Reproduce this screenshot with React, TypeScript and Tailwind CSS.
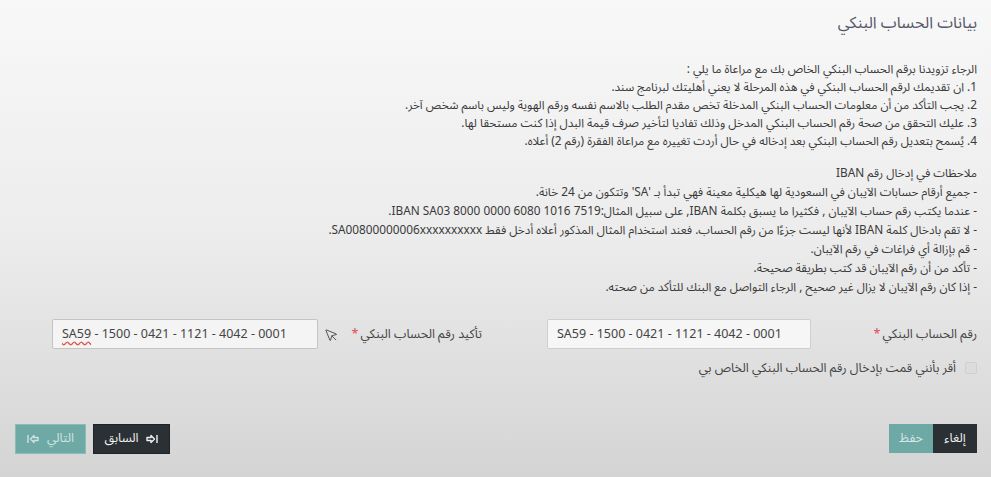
import { MousePointer } from "lucide-react";

const font = { fontFamily: '"Noto Sans Arabic", "DejaVu Sans", "Noto Sans", sans-serif' };

const intro = [
  "الرجاء تزويدنا برقم الحساب البنكي الخاص بك مع مراعاة ما يلي :",
  "1. ان تقديمك لرقم الحساب البنكي في هذه المرحلة لا يعني أهليتك لبرنامج سند.",
  "2. يجب التأكد من أن معلومات الحساب البنكي المدخلة تخص مقدم الطلب بالاسم نفسه ورقم الهوية وليس باسم شخص آخر.",
  "3. عليك التحقق من صحة رقم الحساب البنكي المدخل وذلك تفاديا لتأخير صرف قيمة البدل إذا كنت مستحقا لها.",
  "4. يُسمح بتعديل رقم الحساب البنكي بعد إدخاله في حال أردت تغييره مع مراعاة الفقرة (رقم 2) أعلاه.",
];

const notes = [
  "ملاحظات في إدخال رقم IBAN",
  "- جميع أرقام حسابات الآيبان في السعودية لها هيكلية معينة فهي تبدأ بـ 'SA' وتتكون من 24 خانة.",
  "- عندما يكتب رقم حساب الآيبان , فكثيرا ما يسبق بكلمة IBAN, على سبيل المثال:7519 1016 6080 0000 8000 IBAN SA03.",
  "- لا تقم بادخال كلمة IBAN لأنها ليست جزءًا من رقم الحساب. فعند استخدام المثال المذكور أعلاه أدخل فقط SA00800000006xxxxxxxxxx.",
  "- قم بإزالة أي فراغات في رقم الآيبان.",
  "- تأكد من أن رقم الآيبان قد كتب بطريقة صحيحة.",
  "- إذا كان رقم الآيبان لا يزال غير صحيح , الرجاء التواصل مع البنك للتأكد من صحته.",
];

function ArrowIcon({ dir }: { dir: "left" | "right" }) {
  return (
    <svg width="12" height="10" viewBox="0 0 12 10" className={dir === "left" ? "" : "rotate-180"}>
      <path d="M1 1v8M3.5 5L7 1.5V3.5H11V6.5H7V8.5Z" fill="none" stroke="currentColor" strokeWidth="1.4" strokeLinejoin="round" />
    </svg>
  );
}

export default function App() {
  return (
    <div
      dir="rtl"
      style={font}
      className="flex h-[477px] w-[991px] flex-col bg-gradient-to-b from-[#f8f8f8] via-[#ececec] to-[#d4d4d4] pr-[14px] pl-[15px] text-[#3a3a3a]"
    >
      <h1 className="pt-[12px] text-[16px] leading-[22px] text-[#56566a]">بيانات الحساب البنكي</h1>

      <div className="mt-[27px] text-[11.8px] leading-[18px]">
        {intro.map((l) => (
          <p key={l}>{l}</p>
        ))}
      </div>

      <div className="mt-[13px] text-[11.8px] leading-[19px]">
        {notes.map((l) => (
          <p key={l}>{l}</p>
        ))}
      </div>

      <div className="mt-[22px] flex items-center text-[12.5px]">
        <div className="flex w-[430px] items-center justify-between">
          <label className="text-[#444]">
            رقم الحساب البنكي<span className="mr-[2px] text-[#e04b4b]">*</span>
          </label>
          <input
            dir="ltr"
            readOnly
            value="SA59 - 1500 - 0421 - 1121 - 4042 - 0001"
            className="h-[30px] w-[264px] rounded-[2px] border border-[#cfcfcf] bg-[#f6f6f6] px-[9px] text-[12.5px] text-[#444]"
          />
        </div>
        <div className="mr-[65px] flex w-[430px] items-center justify-between">
          <label className="text-[#444]">
            تأكيد رقم الحساب البنكي<span className="mr-[2px] text-[#e04b4b]">*</span>
          </label>
          <div className="flex items-center gap-[6px]">
            <MousePointer size={15} strokeWidth={1.3} className="translate-y-[1px] text-[#333]" />
            <div
              dir="ltr"
              className="flex h-[30px] w-[266px] items-center rounded-[2px] border border-[#c4c4c4] bg-[#f4f4f4] px-[9px] text-[12.5px] text-[#444]"
            >
              <span className="underline decoration-wavy decoration-[#e05050] underline-offset-[3px]">SA59</span>
              <span>&nbsp;- 1500 - 0421 - 1121 - 4042 - 0001</span>
            </div>
          </div>
        </div>
      </div>

      <label className="mt-[10px] flex items-center gap-[9px] text-[12.5px] text-[#444]">
        <span className="h-[12px] w-[12px] rounded-[2px] border border-[#d0d0d0] bg-[#dcdcdc]" />
        أقر بأنني قمت بإدخال رقم الحساب البنكي الخاص بي
      </label>

      <div className="mt-[46px] flex items-center justify-between text-[12.5px]">
        <div className="flex">
          <button className="h-[29px] w-[44px] border border-[#2a2f33] bg-[#2b3035] text-[#f1f1f1]">إلغاء</button>
          <button className="h-[29px] w-[44px] border border-[#6aa9a5] bg-[#6ea9a5] text-[#d8eae8]">حفظ</button>
        </div>
        <div className="flex gap-[7px]">
          <button className="flex h-[30px] w-[77px] items-center justify-center gap-[8px] border border-[#1f2326] bg-[#2b3035] text-[#f1f1f1]">
            <ArrowIcon dir="right" />
            السابق
          </button>
          <button className="flex h-[30px] w-[71px] items-center justify-center gap-[8px] border border-[#8dbcb8] bg-[#6ea9a5] text-[#cfe4e2]">
            التالي
            <ArrowIcon dir="left" />
          </button>
        </div>
      </div>
    </div>
  );
}
